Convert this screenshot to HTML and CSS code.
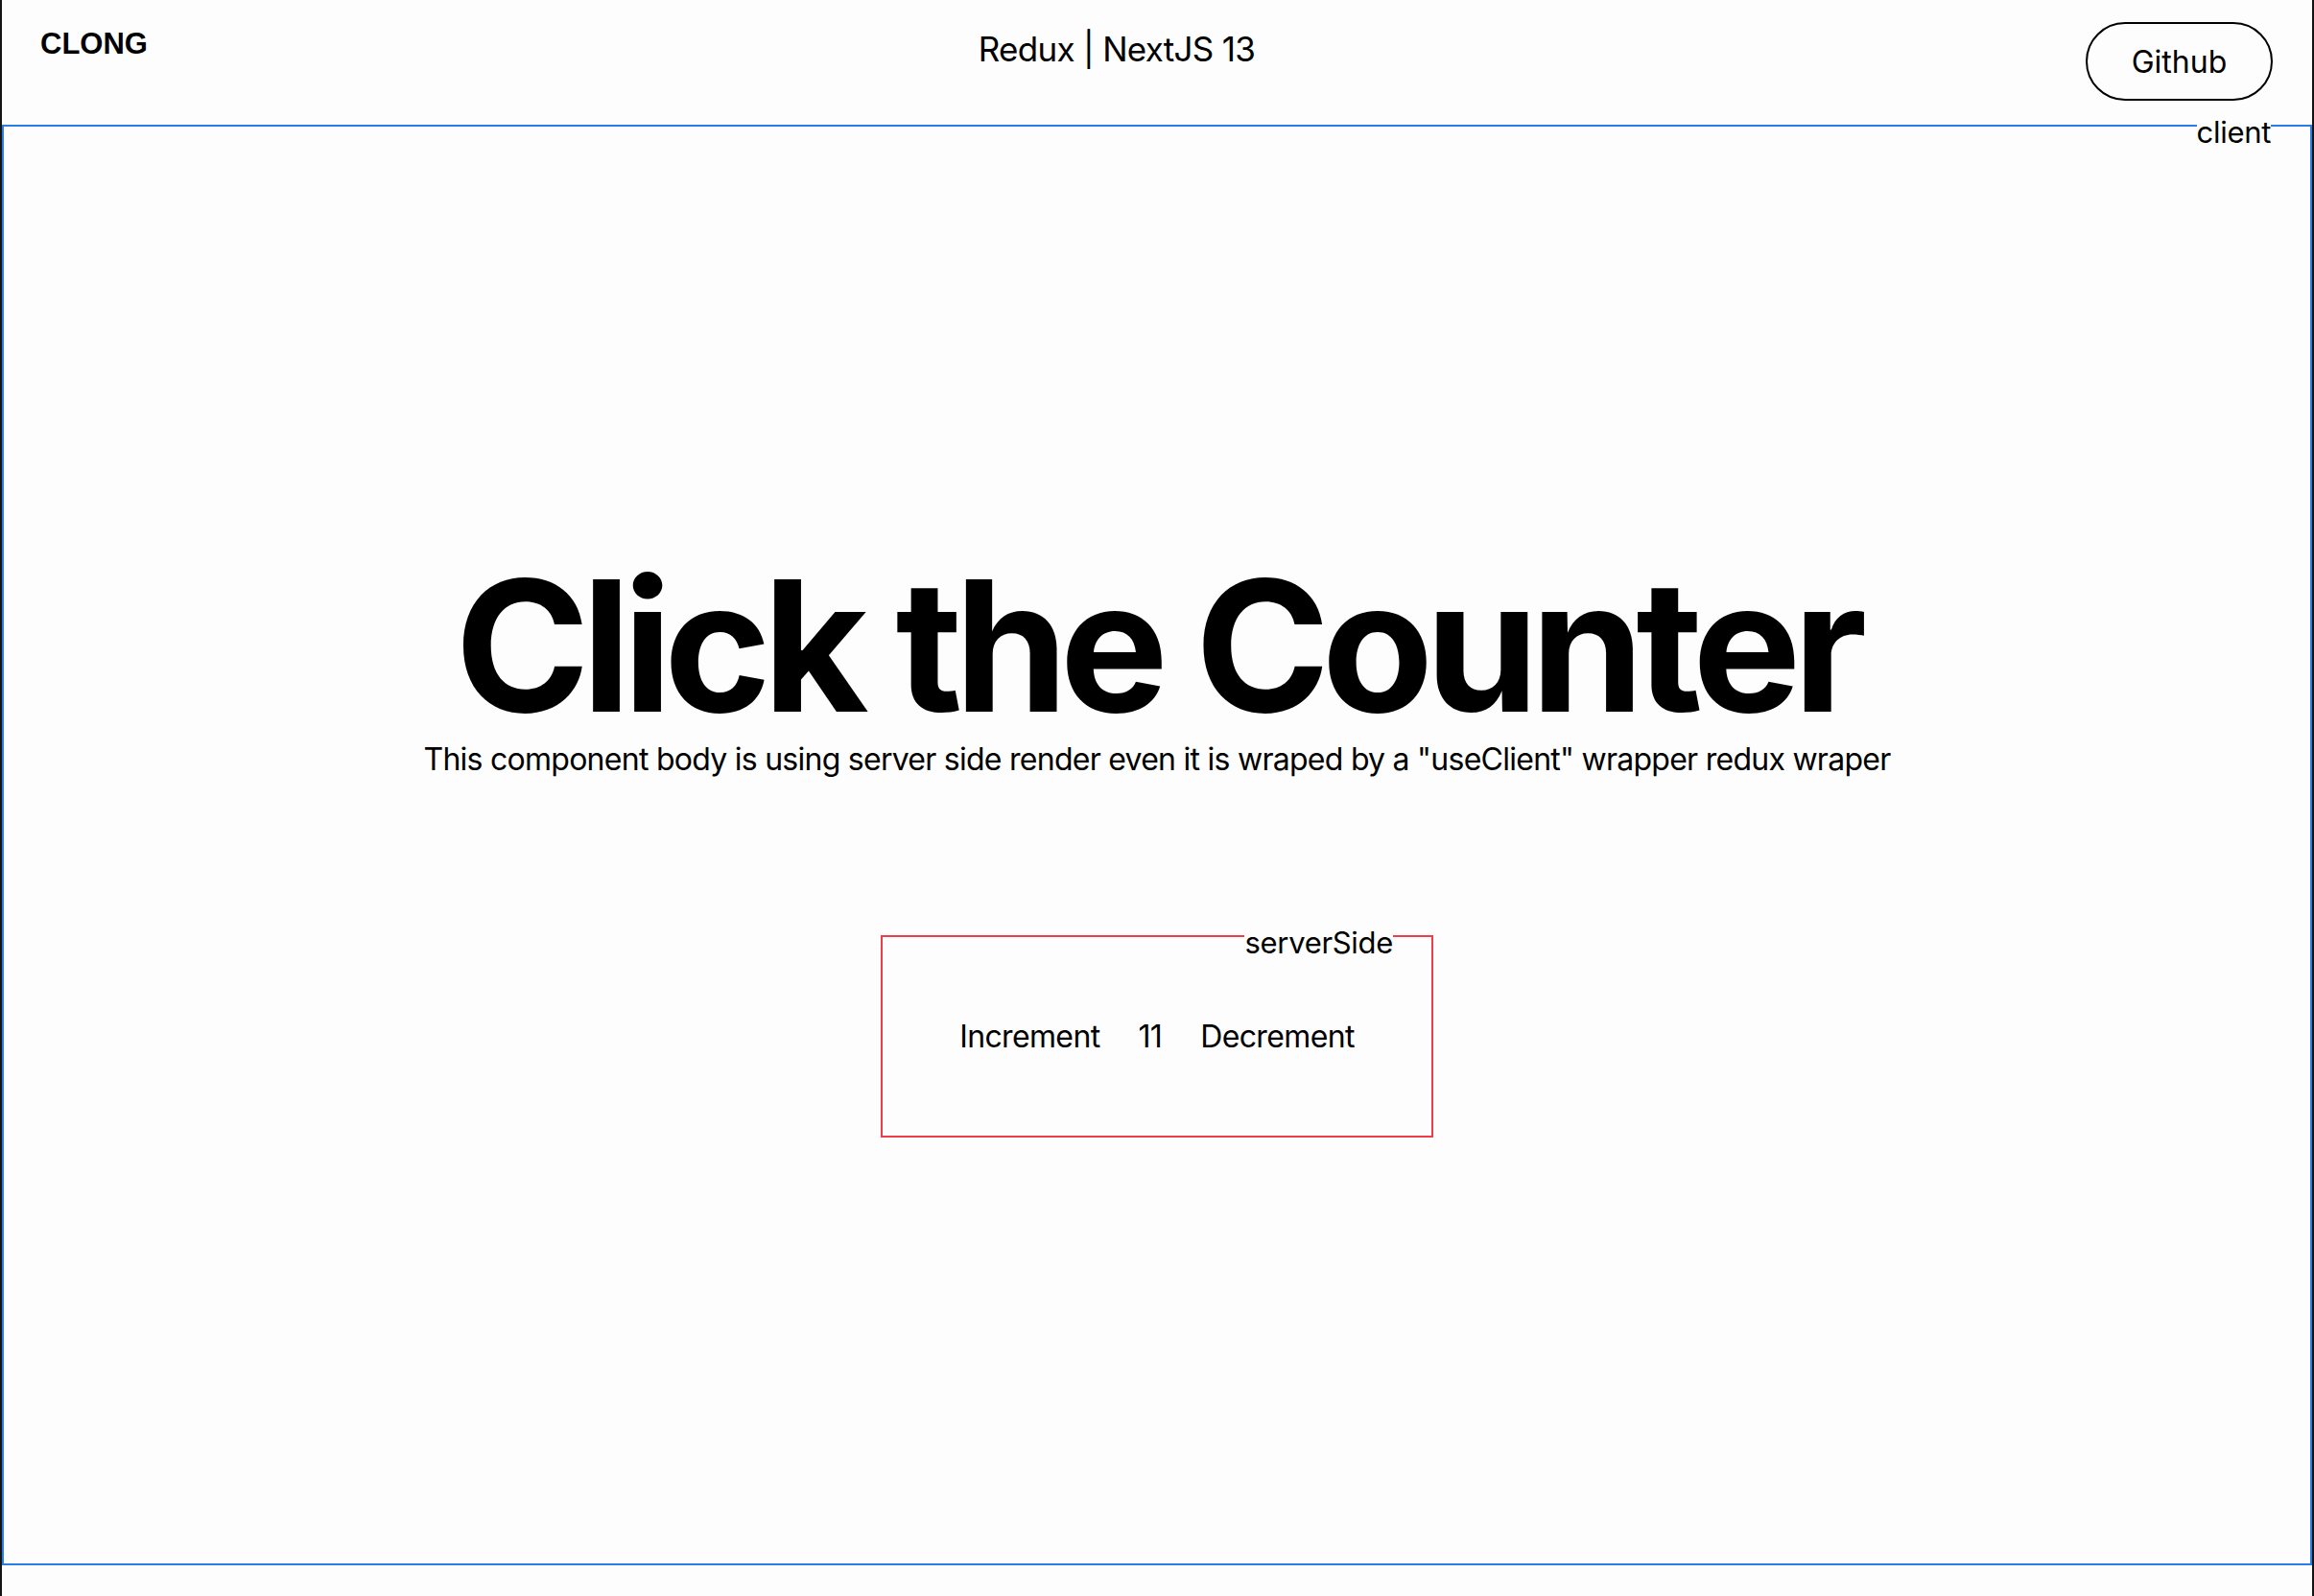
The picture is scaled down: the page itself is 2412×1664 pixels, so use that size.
FILE: index.html
```html
<!DOCTYPE html>
<html lang="en">
<head>
<meta charset="utf-8">
<title>Redux | NextJS 13</title>
<link rel="stylesheet" href="styles.css">
</head>
<body>
<div class="frame">
  <header class="topbar">
    <div class="brand">CLONG</div>
    <div class="title">Redux | NextJS 13</div>
    <a class="gh-btn" href="#">Github</a>
  </header>
  <section class="client-box">
    <span class="tag tag-client">client</span>
    <h1 class="headline">Click the Counter</h1>
    <p class="sub">This component body is using server side render even it is wraped by a "useClient" wrapper redux wraper</p>
    <div class="server-box">
      <span class="tag tag-server">serverSide</span>
      <div class="counter">
        <button class="ctr-btn" type="button">Increment</button>
        <span class="ctr-val">11</span>
        <button class="ctr-btn" type="button">Decrement</button>
      </div>
    </div>
  </section>
</div>
</body>
</html>
```
FILE: styles.css
```css
html, body {
  margin: 0;
  padding: 0;
  background: #fdfdfd;
}
body {
  font-family: Inter, "Noto Sans", sans-serif;
  color: #000;
}
.frame {
  box-sizing: border-box;
  width: 2412px;
  height: 1664px;
  border-left: 2px solid #141414;
  border-right: 2px solid #141414;
  background: #fdfdfd;
}
.topbar {
  box-sizing: border-box;
  height: 130px;
  display: flex;
  justify-content: space-between;
  align-items: flex-start;
  padding: 23px 41px 0 40px;
}
.brand {
  font-family: "Liberation Sans", Arial, sans-serif;
  font-weight: 700;
  font-size: 31px;
  line-height: 36px;
  margin-top: 5px;
}
.title {
  font-size: 35px;
  line-height: 44px;
  letter-spacing: -0.02em;
  margin-top: 6px;
}
.gh-btn {
  box-sizing: border-box;
  width: 195px;
  height: 82px;
  border: 2px solid #000;
  border-radius: 41px;
  display: flex;
  align-items: center;
  justify-content: center;
  font-size: 32px;
  color: #000;
  text-decoration: none;
}
.client-box {
  position: relative;
  box-sizing: border-box;
  height: 1502px;
  border: 2px solid #2a7de2;
  display: flex;
  flex-direction: column;
  align-items: center;
  justify-content: center;
}
.tag {
  position: absolute;
  top: -12px;
  font-size: 31px;
  line-height: 36px;
  letter-spacing: -0.01em;
  background: #fdfdfd;
}
.tag-client {
  right: 41px;
}
.tag-server {
  right: 40px;
}
.headline {
  margin: 0;
  font-size: 190px;
  font-weight: 700;
  line-height: 192px;
  letter-spacing: -0.045em;
}
.sub {
  margin: 3px 0 0;
  font-size: 32px;
  letter-spacing: -0.023em;
}
.server-box {
  position: relative;
  box-sizing: border-box;
  width: 576px;
  height: 211px;
  margin-top: 164px;
  border: 2px solid #ef3d4a;
  display: flex;
  align-items: center;
  justify-content: center;
}
.counter {
  display: flex;
  align-items: center;
  gap: 40px;
  font-size: 32px;
  letter-spacing: -0.02em;
}
.ctr-btn {
  border: 0;
  padding: 0;
  margin: 0;
  background: none;
  font: inherit;
  letter-spacing: inherit;
  color: #000;
}
```
